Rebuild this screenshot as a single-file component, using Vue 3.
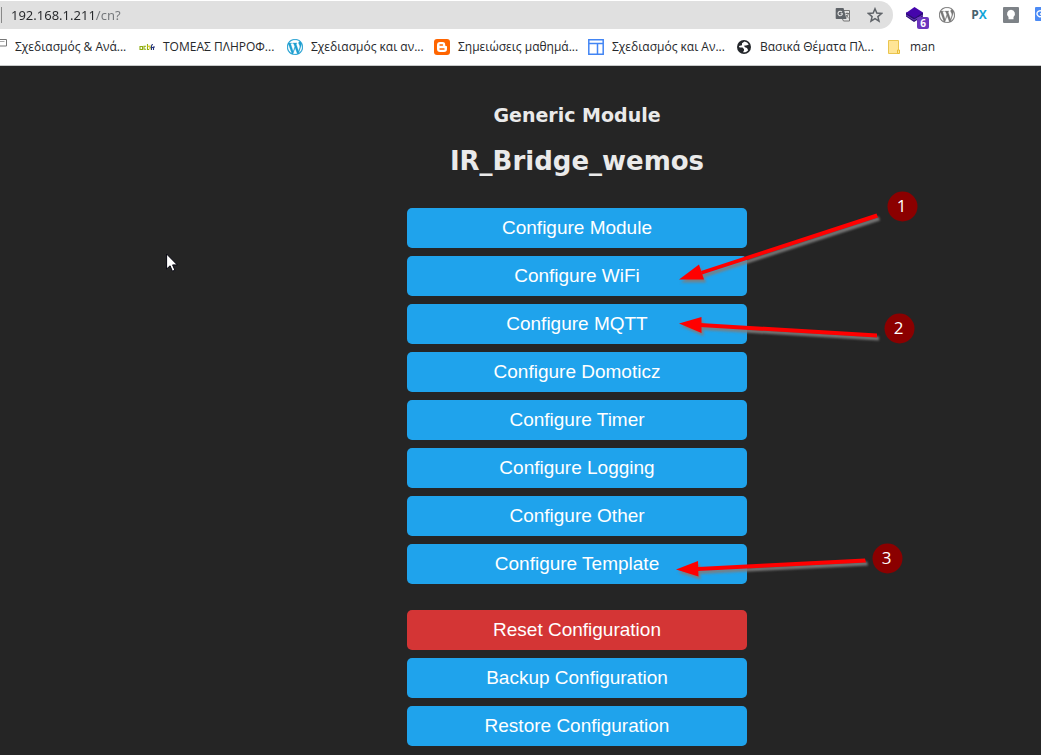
<script setup>
const bookmarks = [
  { icon: 'page', label: 'Σχεδιασμός & Ανά...' },
  { icon: 'active', label: 'ΤΟΜΕΑΣ ΠΛΗΡΟΦ...' },
  { icon: 'wordpress', label: 'Σχεδιασμός και αν...' },
  { icon: 'blogger', label: 'Σημειώσεις μαθημά...' },
  { icon: 'layout', label: 'Σχεδιασμός και Αν...' },
  { icon: 'globe', label: 'Βασικά Θέματα Πλ...' },
  { icon: 'folder', label: 'man' },
]

const configure = ['Module', 'WiFi', 'MQTT', 'Domoticz', 'Timer', 'Logging', 'Other', 'Template']

const callouts = [
  { n: 1, cx: 495.5, cy: -1.5, shaft: '469.5,5.5 471,9.5 295,66.500 294,63', head: '272,71.500 292,56.5 297,71.5' },
  { n: 2, cx: 492.5, cy: 120.5, shaft: '470,125.5 470,129.5 293,119 293,115', head: '272,115.5 294.5,109 294.5,125' },
  { n: 3, cx: 480.5, cy: 350.5, shaft: '458,350.5 459,354.5 291,363 291,359', head: '269,361.5 291,353 291.5,368.5' },
]

const wordpress =
  'M21.469 6.825c.84 1.537 1.318 3.3 1.318 5.175 0 3.979-2.156 7.456-5.363 9.325l3.295-9.527c.615-1.54.82-2.771.82-3.864 0-.405-.026-.78-.07-1.11m-7.981.105c.647-.03 1.232-.105 1.232-.105.582-.075.514-.93-.067-.899 0 0-1.755.135-2.88.135-1.064 0-2.85-.15-2.85-.15-.585-.03-.661.855-.075.885 0 0 .54.061 1.125.09l1.68 4.605-2.37 7.08L5.354 6.9c.649-.03 1.234-.1 1.234-.1.585-.075.516-.93-.065-.896 0 0-1.746.138-2.874.138-.2 0-.438-.008-.69-.015C4.911 3.15 8.235 1.215 12 1.215c2.809 0 5.365 1.072 7.286 2.833-.046-.003-.091-.009-.141-.009-1.06 0-1.812.923-1.812 1.914 0 .89.513 1.643 1.06 2.531.411.72.89 1.643.89 2.977 0 .915-.354 1.994-.821 3.479l-1.075 3.585-3.9-11.61.001.014zM12 22.784c-1.059 0-2.081-.153-3.048-.437l3.237-9.406 3.315 9.087c.024.053.05.101.078.149-1.12.393-2.325.609-3.582.609M1.211 12c0-1.564.336-3.05.935-4.39L7.29 21.709C3.694 19.96 1.212 16.271 1.211 12M12 0C5.385 0 0 5.385 0 12s5.385 12 12 12 12-5.385 12-12S18.615 0 12 0'
</script>

<template>
  <div class="window">
    <header class="chrome">
      <div class="toolbar">
        <div class="omnibox">
          <span class="divider"></span>
          <input class="url" type="text" value="192.168.1.211/cn?" aria-label="Address" />
          <button class="tool" type="button" aria-label="Translate">
            <svg viewBox="0 0 16 16" width="16" height="16">
              <path d="M7 3.500h7.500v10.500H8.500L7 11" fill="#e4e4e4" stroke="#757575" />
              <path d="M1.500 1h7l3 11h-10a.8.8 0 0 1-.8-.8V1.800a.8.8 0 0 1 .8-.8z" fill="#5f6368" />
              <path d="M7 5.200A2.200 2.200 0 1 0 7.400 6.700H5.500" fill="none" stroke="#e8e8e8" stroke-width="1.100" />
              <path d="M10.500 6.500H14M12 5.500v1M13.300 6.500c-.5 2-1 3-2 4M11.300 8c.7 1.500 1.200 2.300 2.200 3" fill="none" stroke="#757575" />
            </svg>
          </button>
          <button class="tool" type="button" aria-label="Bookmark this page">
            <svg viewBox="0 0 16 16" width="16" height="16">
              <path d="M8 1.800l1.800 4.300 4.700.4-3.600 3.100 1.100 4.600L8 11.700l-4 2.500 1.100-4.600L1.500 6.500l4.700-.4z" fill="none" stroke="#5f6368" stroke-width="1.500" />
            </svg>
          </button>
        </div>
        <div class="extensions">
          <button class="ext" type="button" aria-label="Layers">
            <svg viewBox="0 0 20 20" width="20" height="20">
              <path d="M1 7.500v4l8 5.500 9-5.500v-4z" fill="#2c0c74" />
              <path d="M1 10l8 5 9-5" fill="none" stroke="#7a51c7" stroke-width=".8" />
              <path d="M9.500 2L18 7.500 9.500 13 1 8z" fill="#4505ac" />
            </svg>
            <span class="count">6</span>
          </button>
          <button class="ext" type="button" aria-label="WordPress">
            <svg viewBox="0 0 24 24" width="16" height="16"><circle cx="12" cy="12" r="11.500" fill="#fff" /><path :d="wordpress" fill="#777" stroke="#777" stroke-width=".4" /></svg>
          </button>
          <button class="ext px" type="button">P<span>X</span></button>
          <button class="ext" type="button" aria-label="Keep">
            <svg viewBox="0 0 16 16" width="16" height="16">
              <rect width="16" height="16" rx="1" fill="#7d8287" />
              <path d="M8 2.800a4 4 0 0 0-2.500 7.100v2.300h5V9.900A4 4 0 0 0 8 2.800z" fill="#fff" />
            </svg>
          </button>
          <button class="ext" type="button" aria-label="Google Translate">
            <svg viewBox="0 0 16 16" width="16" height="16">
              <path d="M1 0h10l4 14H1a1 1 0 0 1-1-1V1a1 1 0 0 1 1-1z" fill="#4c8bf5" />
              <path d="M7 4.500A3 3 0 1 0 8 7H5" fill="none" stroke="#fff" stroke-width="1.300" />
            </svg>
          </button>
        </div>
      </div>

      <nav class="bookmarks" aria-label="Bookmarks">
        <a v-for="b in bookmarks" :key="b.label" class="bookmark" href="#">
          <svg v-if="b.icon === 'page'" class="icon" viewBox="0 0 16 16">
            <path d="M1 .500h14.500v6.500H1z" fill="#fff" stroke="#777" />
            <path d="M9 2.500h4.500" stroke="#aaa" />
          </svg>
          <svg v-else-if="b.icon === 'active'" class="icon" viewBox="0 0 16 16" fill="none" stroke-width="1.100">
            <path d="M3.500 7v3.500H1V7.500h2.500M7 7.300H5v3h2M8.500 5v5.500H10" stroke="#8fae12" />
            <path d="M8 7.300h2.300M11 6.500v4" stroke="#d8c400" />
            <path d="M12.500 11V7q0-1.500 1.500-1.500M11.500 8.500H14M14.500 11V8H16" stroke="#24357c" />
          </svg>
          <svg v-else-if="b.icon === 'wordpress'" class="icon" viewBox="0 0 24 24"><circle cx="12" cy="12" r="11.500" fill="#fff" /><path :d="wordpress" fill="#1d9fd0" stroke="#1d9fd0" stroke-width=".5" /></svg>
          <svg v-else-if="b.icon === 'blogger'" class="icon" viewBox="0 0 16 16">
            <rect width="16" height="16" rx="3" fill="#ff6500" />
            <path d="M6 3h2.500a2.800 2.800 0 0 1 2.700 3c0 .8.300 1 1 1 .6 0 .8.300.8.800V10a3 3 0 0 1-3 3H6a3 3 0 0 1-3-3V6a3 3 0 0 1 3-3z" fill="#fff" />
            <path d="M6 6h2.500M6 10h4" stroke="#ff6500" stroke-width="1.400" stroke-linecap="round" />
          </svg>
          <svg v-else-if="b.icon === 'layout'" class="icon" viewBox="0 0 16 16">
            <path d="M.8.800h14.400v14.400H.8zM1 4.500h14M9.500 4.500V15" fill="#fff" stroke="#4285f4" stroke-width="1.500" />
          </svg>
          <svg v-else-if="b.icon === 'globe'" class="icon" viewBox="0 0 16 16">
            <circle cx="8" cy="8" r="7" fill="#24272b" />
            <path d="M8.500 2.500L6 4.200v2L3 7c0 1 .5 1.500 1.500 1.500h2L8 10v1.500l-1 1.800c2.500.3 4-.5 5.200-2L11 9l-2-.8L8 6.800l3-.5 1.800-.8A5.500 5.500 0 0 0 8.500 2.500z" fill="#fff" />
          </svg>
          <svg v-else class="icon" viewBox="0 0 16 16">
            <path d="M2.500 1.500h10v13h-10z" fill="#ffe596" stroke="#eac54f" />
            <path d="M11.500 11h2v3.500h-2z" fill="#ffe596" stroke="#e8bd35" />
          </svg>
          <span>{{ b.label }}</span>
        </a>
      </nav>
    </header>

    <main class="page">
      <div class="content">
        <h3>Generic Module</h3>
        <h2>IR_Bridge_wemos</h2>
        <div class="menu">
          <button v-for="name in configure" :key="name" class="btn" type="button">Configure {{ name }}</button>
          <button class="btn danger" type="button">Reset Configuration</button>
          <button class="btn" type="button">Backup Configuration</button>
          <button class="btn" type="button">Restore Configuration</button>

          <svg class="callouts" viewBox="0 0 340 538" width="340" height="538">
            <g v-for="c in callouts" :key="c.n">
              <g class="arrow">
                <polygon :points="c.shaft" />
                <polygon :points="c.head" />
              </g>
              <circle :cx="c.cx" :cy="c.cy" r="15" fill="#8b0000" />
              <text :x="c.cx - 1" :y="c.cy + 5">{{ c.n }}</text>
            </g>
          </svg>
        </div>
      </div>
      <svg class="cursor" viewBox="0 0 12 19" width="12" height="19">
        <path d="M.6 1v15l3.500-3.200 2.300 5.400 2.500-1-2.300-5.300h4.700z" fill="#fff" stroke="#05050f" />
      </svg>
    </main>
  </div>
</template>

<style>
body {
  margin: 0;
  background: #252525;
}
</style>

<style scoped>
.window {
  min-height: 100vh;
  display: flex;
  flex-direction: column;
  overflow: hidden;
  font-family: "Open Sans", "Noto Sans", sans-serif;
}

button {
  border: 0;
  padding: 0;
  background: none;
  cursor: pointer;
}

svg {
  display: block;
}

.chrome {
  background: #fff;
  border-bottom: 1px solid #c8caca;
  overflow: hidden;
}

.toolbar {
  display: flex;
  align-items: center;
  padding-top: 1px;
}

.omnibox {
  flex: 1;
  min-width: 0;
  height: 28px;
  display: flex;
  align-items: center;
  gap: 16px;
  padding: 0 10px 0 1px;
  box-sizing: border-box;
  background: #e0e0e0;
  border-radius: 0 14px 14px 0;
}

.divider {
  width: 1px;
  height: 16px;
  background: #888;
}

.url {
  flex: 1;
  min-width: 0;
  margin-left: -7px;
  border: 0;
  padding: 0;
  outline: 0;
  font: 13px/20px "Noto Sans", sans-serif;
  color: transparent;
  background: linear-gradient(90deg, #26282b 85px, #73767a 85px);
  background-clip: text;
}

.extensions {
  width: 148px;
  display: flex;
  align-items: center;
  gap: 16px;
  padding-left: 12px;
  box-sizing: border-box;
}

.ext {
  position: relative;
  flex: none;
}

.ext:first-child {
  margin-right: -2px;
}

.count {
  position: absolute;
  left: 12px;
  top: 12px;
  width: 12px;
  height: 12px;
  border-radius: 2px;
  background: #6b35bd;
  color: #fff;
  font: bold 10px/12px "Open Sans", sans-serif;
  text-align: center;
}

.px {
  width: 16px;
  font: bold 12px/16px "Open Sans", sans-serif;
  color: #47616d;
}

.px span {
  color: #12a5d8;
}

.bookmarks {
  display: grid;
  grid-template-columns: 148px 148px 147px 154px 148px 150px auto;
  align-items: center;
  height: 36px;
  margin-left: -9px;
}

.bookmark {
  display: flex;
  align-items: center;
  gap: 8px;
  color: #26282b;
  font-size: 12px;
  line-height: 16px;
  white-space: nowrap;
  text-decoration: none;
}

.icon {
  flex: none;
  width: 16px;
  height: 16px;
}

.page {
  position: relative;
  flex: 1;
  background: #252525;
  padding: 37px 0 9px 113px;
  color: #eaeaea;
}

.content {
  width: 340px;
  margin: 0 auto;
  text-align: center;
}

h3,
h2 {
  margin: 0;
  font-family: Verdana, "DejaVu Sans", sans-serif;
  font-weight: bold;
}

h3 {
  font-size: 19px;
  line-height: 24px;
}

h2 {
  margin: 18px 0 31px;
  font-size: 26px;
  line-height: 32px;
}

.menu {
  position: relative;
  display: flex;
  flex-direction: column;
  gap: 8px;
}

.btn {
  height: 40px;
  border-radius: 5px;
  background: #1fa3ec;
  color: #fff;
  font: 19px/40px "Liberation Sans", Arial, sans-serif;
}

.danger {
  margin-top: 18px;
  background: #d43535;
}

.callouts {
  position: absolute;
  left: 0;
  top: 0;
  overflow: visible;
  pointer-events: none;
}

.arrow {
  fill: #f00;
  filter: drop-shadow(2px 3px 1px rgba(125, 125, 125, 0.9));
}

.callouts text {
  fill: #fff;
  font: 17px "Open Sans", sans-serif;
  text-anchor: middle;
}

.cursor {
  position: absolute;
  left: 166px;
  top: 187px;
}
</style>
